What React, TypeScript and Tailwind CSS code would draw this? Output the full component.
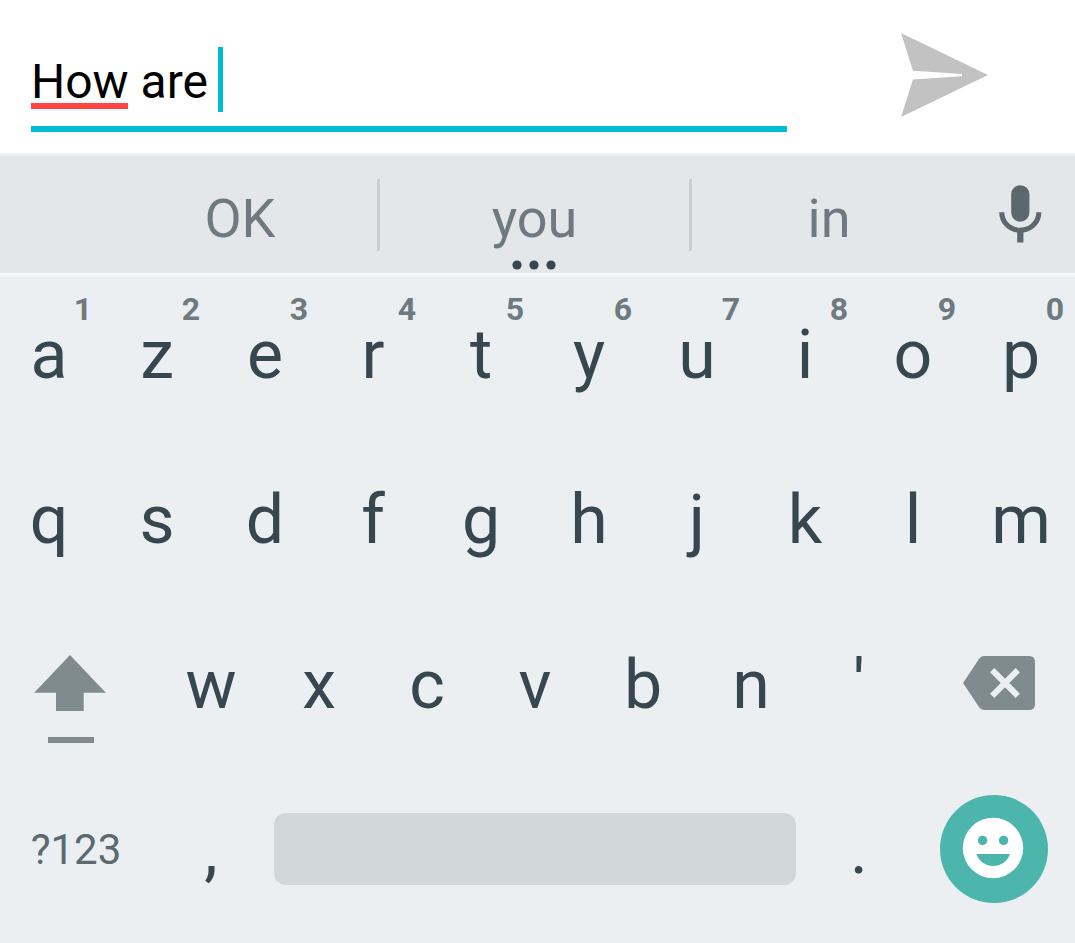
import { useState } from "react";

const TOP_ROW = ["a", "z", "e", "r", "t", "y", "u", "i", "o", "p"];
const HINTS = ["1", "2", "3", "4", "5", "6", "7", "8", "9", "0"];
const HOME_ROW = ["q", "s", "d", "f", "g", "h", "j", "k", "l", "m"];
const BOTTOM_ROW = ["w", "x", "c", "v", "b", "n", "'"];

function Key({ label, hint }: { label: string; hint?: string }) {
  return (
    <button
      type="button"
      className="relative col-span-2 flex h-full items-center justify-center text-[68px] leading-none font-[450] text-[#37474f]"
    >
      {label}
      {hint && (
        <span className="absolute top-[15px] right-[11px] text-[32px] leading-9 font-bold text-[#6e7a80]">
          {hint}
        </span>
      )}
    </button>
  );
}

function SendIcon() {
  return (
    <svg width="87" height="84" viewBox="0 0 87 84" fill="#c2c2c2" aria-hidden="true">
      <path d="M0 0L87 42L0 84L12 46.5L61 43.2V41L12 37.8Z" />
    </svg>
  );
}

function MicIcon() {
  return (
    <svg width="43" height="58" viewBox="0 0 43 58" fill="#5b686e" aria-hidden="true">
      <rect x="12.2" y="0.2" width="18.2" height="36.5" rx="9.1" />
      <path d="M0.2 27.3H5.3C5.3 36.3 12.5 42.7 21.3 42.7S37.3 36.3 37.3 27.3H42.4C42.4 37.9 34.5 46.2 24.4 47.5V57.6H18.2V47.5C8.1 46.2 0.2 37.9 0.2 27.3Z" />
    </svg>
  );
}

function ShiftIcon() {
  return (
    <svg width="72" height="88" viewBox="0 0 72 88" fill="#808b8f" aria-hidden="true">
      <path d="M36 0L71.8 37.8H49.7V56H22V37.8H0.2Z" />
      <path d="M14 82H60V88H14Z" />
    </svg>
  );
}

function BackspaceIcon() {
  return (
    <svg width="72" height="54" viewBox="0 0 72 54" aria-hidden="true">
      <path
        fill="#808b8f"
        d="M66 0H21.5Q18 0 16 3L0 27L16 51Q18 54 21.5 54H66Q72 54 72 48V6Q72 0 66 0Z"
      />
      <path d="M29.2 14.200L54.800 39.800M54.800 14.200L29.200 39.800" stroke="#ebeff2" strokeWidth="6" />
    </svg>
  );
}

function SmileyIcon() {
  return (
    <svg width="108" height="108" viewBox="0 0 108 108" aria-hidden="true">
      <circle cx="54" cy="54" r="54" fill="#4db6ac" />
      <circle cx="53" cy="53" r="30.2" fill="#fff" />
      <g fill="#4db6ac">
        <circle cx="42.6" cy="45.4" r="4.7" />
        <circle cx="63.6" cy="45.4" r="4.7" />
        <path d="M36.4 59H70C67.5 66.2 61 71 53.2 71S38.9 66.2 36.4 59Z" />
      </g>
    </svg>
  );
}

export default function App() {
  const [message, setMessage] = useState("How are ");

  return (
    <div className="min-h-screen overflow-hidden bg-[#ebeff2] font-['Roboto',sans-serif]">
      <form
        className="flex items-start bg-white pt-[33px] pb-[21px] pl-[31px]"
        onSubmit={(e) => e.preventDefault()}
      >
        <div className="relative mt-[14px] flex-1 border-b-6 border-[#00bcd5] pb-[10px]">
          <input
            type="text"
            aria-label="Message"
            value={message}
            onChange={(e) => setMessage(e.target.value)}
            spellCheck={false}
            autoComplete="off"
            className="block h-[69px] w-full bg-transparent text-5xl text-black caret-transparent outline-none"
          />
          <span className="absolute top-14 left-0 h-1.5 w-[97px] bg-[#ff4444]" />
          <span className="absolute top-0 left-[187px] h-[65px] w-[5px] bg-[#00bcd5]" />
        </div>
        <button type="submit" aria-label="Send" className="mr-[87px] ml-[114px] shrink-0">
          <SendIcon />
        </button>
      </form>

      <div className="flex h-[123px] items-center border-y-3 border-t-[#eef0f2] border-b-[#f5f7f9] bg-[#e3e7ea] pl-[103px] text-[54px] leading-none text-[#6e7a80]">
        <button type="button" className="h-full flex-[274] pt-2">
          OK
        </button>
        <span className="h-[72px] w-[3px] bg-[#c9ced1]" />
        <button type="button" className="relative h-full flex-[309] pt-2">
          you
          <svg
            className="absolute inset-x-0 bottom-[3px] mx-auto"
            width="45"
            height="10"
            viewBox="0 0 45 10"
            fill="#37474f"
            aria-hidden="true"
          >
            <circle cx="5" cy="5" r="4.6" />
            <circle cx="22" cy="5" r="4.6" />
            <circle cx="39" cy="5" r="4.6" />
          </svg>
        </button>
        <span className="h-[72px] w-[3px] bg-[#c9ced1]" />
        <button type="button" className="h-full flex-[274] pt-2">
          in
        </button>
        <button
          type="button"
          aria-label="Voice input"
          className="flex h-full w-[109px] items-center justify-center pb-0.5"
        >
          <MicIcon />
        </button>
      </div>

      <div className="-ml-[5px] grid auto-rows-[157px] grid-cols-20 gap-y-2 pb-[15px]">
        {TOP_ROW.map((k, i) => (
          <Key key={k} label={k} hint={HINTS[i]} />
        ))}
        {HOME_ROW.map((k) => (
          <Key key={k} label={k} />
        ))}

        <button
          type="button"
          aria-label="Shift"
          className="col-span-3 flex items-center justify-center pt-7 pr-3"
        >
          <ShiftIcon />
        </button>
        {BOTTOM_ROW.map((k) => (
          <Key key={k} label={k} />
        ))}
        <button
          type="button"
          aria-label="Backspace"
          className="col-span-3 flex items-center justify-center pb-1 pl-[10px]"
        >
          <BackspaceIcon />
        </button>

        <button type="button" className="col-span-3 text-[42px] leading-none text-[#5c6a70]">
          ?123
        </button>
        <Key label="," />
        <button
          type="button"
          aria-label="Space"
          className="col-span-10 mx-[9px] mb-px h-[72px] self-center rounded-xl bg-[#d1d6d9]"
        />
        <Key label="." />
        <button
          type="button"
          aria-label="Emoji"
          className="col-span-3 flex items-center justify-center pb-px"
        >
          <SmileyIcon />
        </button>
      </div>
    </div>
  );
}
